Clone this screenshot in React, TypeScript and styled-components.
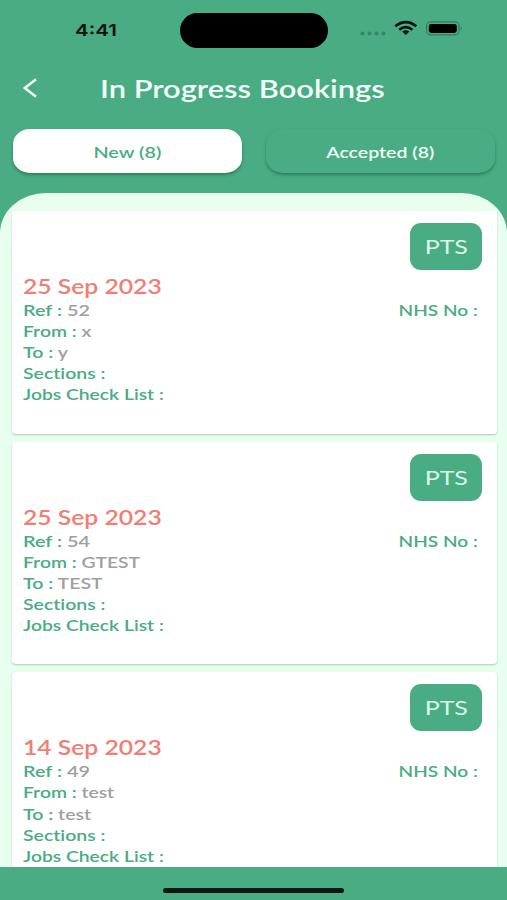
import React from "react";
import styled, { createGlobalStyle } from "styled-components";

const GREEN = "#49ac83";
const MINT = "#e8feef";

const GlobalStyle = createGlobalStyle`
  * { box-sizing: border-box; }
  body { margin: 0; background: ${GREEN}; }
`;

const Screen = styled.main`
  width: 507px;
  height: 900px;
  display: flex;
  flex-direction: column;
  overflow: hidden;
  background: ${GREEN};
  font-family: Lato, "Open Sans", sans-serif;
  font-variant-ligatures: none;
`;

const Stretch = styled.span<{ $x: number; $origin?: string }>`
  display: inline-block;
  white-space: pre;
  transform: scaleX(${(p) => p.$x});
  transform-origin: ${(p) => p.$origin ?? "left"} center;
`;

const StatusBar = styled.div`
  height: 60px;
  flex: none;
  display: grid;
  grid-template-columns: 180px 148px 1fr;
  align-items: center;
`;

const Clock = styled.time`
  padding: 0 0 1px 75px;
  font: 600 16.5px/20px Inter, sans-serif;
  color: #06130e;
`;

const Island = styled.div`
  height: 35px;
  border-radius: 18px;
  background: #000;
`;

const StatusIcons = styled.div`
  display: flex;
  align-items: center;
  padding-left: 32px;
  height: 20px;
  margin-top: -2px;
`;

const TitleBar = styled.header`
  height: 68px;
  flex: none;
  display: grid;
  grid-template-columns: 100px 1fr;
  align-items: center;
  padding-bottom: 13px;
`;

const BackButton = styled.button`
  border: 0;
  background: none;
  padding: 0 0 0 22px;
  height: 22px;
  display: flex;
`;

const Title = styled.h1`
  margin: 0;
  font-size: 25px;
  line-height: 32px;
  font-weight: 600;
  color: #f4fffa;
`;

const Tabs = styled.nav`
  flex: none;
  height: 65px;
  padding: 1px 12px 0 13px;
  display: flex;
  justify-content: space-between;
`;

const Tab = styled.button<{ $active?: boolean }>`
  width: 229px;
  height: 44px;
  border: 0;
  border-radius: 17px / 15px;
  padding: 2px 1px 0 0;
  font: 600 16px/20px Lato, sans-serif;
  background: ${(p) => (p.$active ? "#fff" : GREEN)};
  color: ${(p) => (p.$active ? GREEN : "#f0fff7")};
  box-shadow: 0 2px 3px rgba(10, 60, 38, 0.4);
`;

const Panel = styled.section`
  height: 674px;
  flex: none;
  padding: 18px 10.5px 0 11.5px;
  border-radius: 46px 46px 0 0 / 40px 40px 0 0;
  background: ${MINT};
  overflow: hidden;
`;

const Card = styled.article<{ $first?: boolean }>`
  height: 222.5px;
  margin-bottom: 8.2px;
  padding: 12px 14.5px 0 11.5px;
  border-radius: ${(p) => (p.$first ? "0 0 4px 4px" : "4px")};
  background: #fff;
  box-shadow: 0 1px 2px rgba(30, 70, 50, 0.28);
`;

const Badge = styled.div`
  width: 72px;
  height: 47px;
  margin-left: auto;
  border-radius: 11px;
  display: grid;
  place-items: center;
  padding-bottom: 1px;
  background: ${GREEN};
  color: #dcfbea;
  font-size: 20px;
  line-height: 24px;
`;

const DateText = styled.h2`
  margin: 4px 0 0;
  height: 25px;
  font-size: 20.5px;
  line-height: 25px;
  font-weight: 600;
  color: #f17e74;
`;

const Row = styled.div`
  height: 21.1px;
  display: flex;
  justify-content: space-between;
  font-size: 16px;
  line-height: 21.1px;
  font-weight: 600;
  color: ${GREEN};
`;

const Value = styled.span`
  color: #a0a0a0;
`;

const HomeArea = styled.footer`
  flex: 1;
  display: flex;
  justify-content: center;
  padding-top: 20.5px;
`;

const HomeBar = styled.div`
  width: 181px;
  height: 5px;
  border-radius: 3px;
  background: #0a1712;
`;

interface Booking {
  date: string;
  reference: string;
  from: string;
  to: string;
}

const bookings: Booking[] = [
  { date: "25 Sep 2023", reference: "52", from: "x", to: "y" },
  { date: "25 Sep 2023", reference: "54", from: "GTEST", to: "TEST" },
  { date: "14 Sep 2023", reference: "49", from: "test", to: "test" },
];

function Field({ label, value, x = 1.205 }: { label: string; value?: string; x?: number }) {
  return (
    <Stretch $x={x}>
      {label} :{value && <Value> {value}</Value>}
    </Stretch>
  );
}

function BookingCard({ booking, first }: { booking: Booking; first: boolean }) {
  return (
    <Card $first={first}>
      <Badge>
        <Stretch $x={1.25} $origin="center">PTS</Stretch>
      </Badge>
      <DateText>
        <Stretch $x={1.205}>{booking.date}</Stretch>
      </DateText>
      <Row>
        <Field label="Ref" value={booking.reference} x={1.24} />
        <Stretch $x={1.19} $origin="right">NHS No :{" "}</Stretch>
      </Row>
      <Row><Field label="From" value={booking.from} /></Row>
      <Row><Field label="To" value={booking.to} x={1.22} /></Row>
      <Row><Field label="Sections" x={1.215} /></Row>
      <Row><Field label="Jobs Check List" /></Row>
    </Card>
  );
}

export default function App() {
  return (
    <Screen>
      <GlobalStyle />
      <StatusBar>
        <Clock><Stretch $x={1.24}>4:41</Stretch></Clock>
        <Island />
        <StatusIcons>
          <svg width="106" height="20" viewBox="0 0 106 20">
            <g fill="#2f7d5d" opacity="0.8">
              <circle cx="2.5" cy="14.5" r="1.9" />
              <circle cx="9.5" cy="14.5" r="1.9" />
              <circle cx="16.5" cy="14.5" r="1.9" />
              <circle cx="23.5" cy="14.5" r="1.9" />
            </g>
            <g fill="none" stroke="#06130e" strokeWidth="2.6">
              <path d="M35.3 7.3Q45.8-1 56.3 7.3" />
              <path d="M39.2 10.8Q45.8 5.3 52.4 10.8" />
            </g>
            <path d="M42.2 12.5Q45.8 10 49.4 12.5L45.8 16Z" fill="#06130e" />
            <rect x="66.6" y="2.9" width="32.5" height="13" rx="4" fill="none" stroke="#2f7d5d" strokeWidth="1.2" />
            <rect x="68.8" y="4.9" width="28" height="9" rx="2.4" fill="#000" />
            <path d="M100.7 7.2Q103 9.4 100.7 11.6Z" fill="#2f7d5d" />
          </svg>
        </StatusIcons>
      </StatusBar>
      <TitleBar>
        <BackButton aria-label="Back">
          <svg width="18" height="22" viewBox="0 0 18 22">
            <path d="M14 2.2L2.8 11L14 19.8" fill="none" stroke="#f4fffa" strokeWidth="2.5" />
          </svg>
        </BackButton>
        <Title><Stretch $x={1.235}>In Progress Bookings</Stretch></Title>
      </TitleBar>
      <Tabs>
        <Tab $active><Stretch $x={1.24} $origin="center">New (8)</Stretch></Tab>
        <Tab><Stretch $x={1.22} $origin="center">Accepted (8)</Stretch></Tab>
      </Tabs>
      <Panel>
        {bookings.map((booking, i) => (
          <BookingCard key={booking.reference} booking={booking} first={i === 0} />
        ))}
      </Panel>
      <HomeArea><HomeBar /></HomeArea>
    </Screen>
  );
}
